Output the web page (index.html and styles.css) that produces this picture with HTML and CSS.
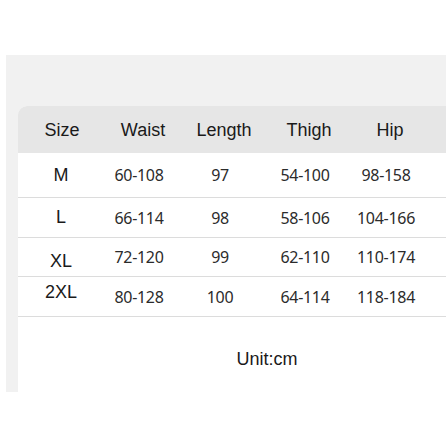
FILE: index.html
```html
<!DOCTYPE html>
<html>
<head>
<meta charset="utf-8">
<link rel="stylesheet" href="styles.css">
</head>
<body>
<div class="page">
  <div class="panel">
    <div class="card">
      <div class="row head">
        <div class="cell">Size</div>
        <div class="cell">Waist</div>
        <div class="cell">Length</div>
        <div class="cell">Thigh</div>
        <div class="cell">Hip</div>
      </div>
      <div class="row r1">
        <div class="cell size">M</div>
        <div class="cell num">60-108</div>
        <div class="cell num">97</div>
        <div class="cell num">54-100</div>
        <div class="cell num">98-158</div>
      </div>
      <div class="row r2">
        <div class="cell size">L</div>
        <div class="cell num">66-114</div>
        <div class="cell num">98</div>
        <div class="cell num">58-106</div>
        <div class="cell num">104-166</div>
      </div>
      <div class="row r3">
        <div class="cell size low">XL</div>
        <div class="cell num">72-120</div>
        <div class="cell num">99</div>
        <div class="cell num">62-110</div>
        <div class="cell num">110-174</div>
      </div>
      <div class="row r4">
        <div class="cell size high">2XL</div>
        <div class="cell num">80-128</div>
        <div class="cell num">100</div>
        <div class="cell num">64-114</div>
        <div class="cell num">118-184</div>
      </div>
      <div class="foot">Unit:cm</div>
    </div>
  </div>
</div>
</body>
</html>
```

FILE: styles.css
```css
html, body {
  margin: 0;
  padding: 0;
  background: #ffffff;
}
.page {
  width: 446px;
  height: 446px;
  padding-top: 55px;
  box-sizing: border-box;
}
.panel {
  margin-left: 6px;
  height: 337px;
  background: #f1f1f1;
  padding: 51px 0 0 12px;
  box-sizing: border-box;
  display: flex;
}
.card {
  flex: 1;
  background: #ffffff;
  border-top-left-radius: 9px;
  overflow: hidden;
  display: flex;
  flex-direction: column;
}
.row {
  display: grid;
  grid-template-columns: 84px 74px 88px 82px 80px 1fr;
  align-items: center;
  border-bottom: 1px solid #dcdcdc;
  box-sizing: border-box;
}
.cell {
  text-align: center;
  white-space: nowrap;
}
.head {
  height: 47px;
  background: #e6e6e6;
  border-bottom: none;
  font-family: "Liberation Sans", Arial, sans-serif;
  font-size: 18px;
  color: #1a1a1a;
  padding-top: 1px;
}
.head .cell {
  padding-left: 8px;
}
.head .cell:first-child {
  padding-left: 4px;
}
.r1 { height: 45px; }
.r2 { height: 40px; }
.r3 { height: 39px; }
.r4 { height: 40px; }
.size {
  font-family: "Liberation Sans", Arial, sans-serif;
  font-size: 18px;
  color: #1a1a1a;
  padding-left: 2px;
}
.size.low { padding-top: 9px; }
.size.high { padding-bottom: 9px; }
.num {
  font-family: "Noto Sans", "Open Sans", sans-serif;
  font-size: 16px;
  letter-spacing: -0.3px;
  color: #2b2b2b;
}
.foot {
  flex: 1;
  padding: 32px 0 0 70px;
  text-align: center;
  font-family: "Liberation Sans", Arial, sans-serif;
  font-size: 18px;
  line-height: 20px;
  color: #1a1a1a;
}
```
